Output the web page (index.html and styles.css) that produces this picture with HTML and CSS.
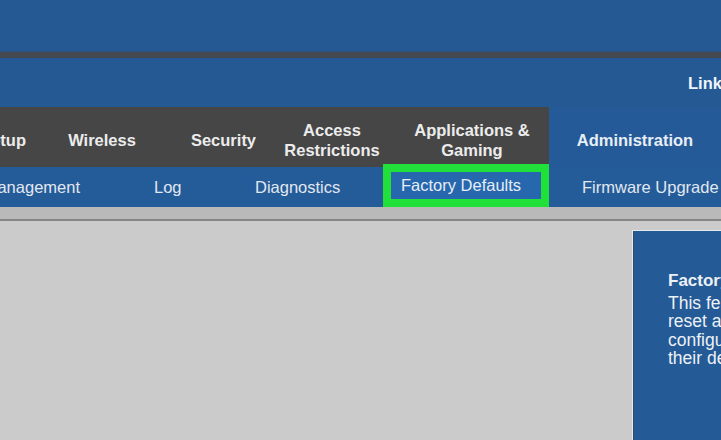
FILE: index.html
```html
<!DOCTYPE html>
<html lang="en">
<head>
  <meta charset="UTF-8">
  <meta name="viewport" content="width=device-width, initial-scale=1.0">
  <title>Administration - Factory Defaults</title>
  <link rel="stylesheet" href="styles.css">
</head>
<body>
  <div class="page">
    <div class="top-band"></div>
    <div class="rule"></div>
    <div class="brand-row">
      <span class="brand">Linksys E1200</span>
    </div>

    <nav class="tabs">
      <div class="tab tab-setup">Setup</div>
      <div class="tab tab-wireless">Wireless</div>
      <div class="tab tab-security">Security</div>
      <div class="tab tab-access">Access<br>Restrictions</div>
      <div class="tab tab-apps">Applications &amp;<br>Gaming</div>
      <div class="tab tab-admin active">Administration</div>
    </nav>

    <nav class="subtabs">
      <div class="sub sub-mgmt">Management</div>
      <div class="sub sub-log">Log</div>
      <div class="sub sub-diag">Diagnostics</div>
      <div class="sub sub-factory">
        <div class="highlight">Factory Defaults</div>
      </div>
      <div class="sub sub-firmware">Firmware Upgrade</div>
    </nav>

    <div class="strip"></div>

    <main class="content">
      <aside class="help">
        <div class="help-title">Factory Defaults:</div>
        This feature allows you to<br>
        reset all of the<br>
        configuration settings to<br>
        their default values.
      </aside>
    </main>
  </div>
</body>
</html>
```

FILE: styles.css
```css
html, body {
  margin: 0;
  padding: 0;
  overflow: hidden;
}

body {
  font-family: "Liberation Sans", Arial, sans-serif;
  background-color: #cbcbcb;
  color: #e9edf2;
}

.page {
  width: 721px;
  height: 440px;
  overflow: hidden;
  display: flex;
  flex-direction: column;
}

.page > * {
  flex: none;
}

.top-band {
  height: 52px;
  background-color: #245994;
}

.rule {
  height: 6px;
  background-color: #444851;
  box-shadow: 0 0 2px #444851;
}

.brand-row {
  height: 49px;
  background-color: #245994;
  display: flex;
  align-items: center;
  padding-left: 688px;
  padding-top: 1px;
  box-sizing: border-box;
  white-space: nowrap;
}

.brand {
  font-weight: bold;
  font-size: 16.5px;
  color: #eef3fa;
}

/* main tab row */
.tabs {
  display: flex;
  height: 60px;
  background-color: #464646;
}

.tab {
  flex: none;
  display: flex;
  align-items: center;
  justify-content: center;
  text-align: center;
  box-sizing: border-box;
  padding-top: 5px;
  font-weight: bold;
  font-size: 16.5px;
  line-height: 20px;
  color: #ececec;
  white-space: nowrap;
}

.tab-setup { width: 26px; justify-content: flex-end; overflow: hidden; }
.tab-wireless { width: 152px; }
.tab-security { width: 91px; }
.tab-access { width: 126px; }
.tab-apps { width: 154px; }
.tab-admin { width: 172px; }

.tab.active {
  background-color: #245a97;
  color: #e8eef6;
}

/* sub tab row */
.subtabs {
  display: flex;
  height: 40px;
  background-color: #245b99;
}

.sub {
  flex: none;
  display: flex;
  align-items: center;
  font-size: 16.5px;
  color: #e2e8f0;
  white-space: nowrap;
  box-sizing: border-box;
}

.sub-mgmt { width: 154px; justify-content: flex-end; padding-right: 74px; overflow: hidden; }
.sub-log { width: 101px; }
.sub-diag { width: 128px; }
.sub-factory { width: 166px; align-items: stretch; }
.sub-firmware { width: 172px; padding-left: 33px; }

.highlight {
  flex: 1;
  margin-top: -3px;
  border: 8px solid #22e03a;
  background-color: #2767ae;
  display: flex;
  align-items: center;
  padding-left: 10px;
  color: #e6edf5;
}

.strip {
  height: 12px;
  background-color: #b9b9b9;
  border-bottom: 2px solid #858585;
}

/* body area */
.content {
  flex: 1 1 auto;
  display: flex;
  padding: 10px 0 0 633px;
  background-color: #cbcbcb;
}

.help {
  flex: none;
  width: 240px;
  height: 260px;
  box-sizing: border-box;
  background-color: #245a96;
  border-left: 1px solid #3a4d66;
  box-shadow: -1px -1px 0 #e4e9ef;
  padding: 41px 0 0 34px;
  font-size: 17.5px;
  line-height: 18.5px;
  color: #edf1f6;
  white-space: nowrap;
}

.help-title {
  font-weight: bold;
  font-size: 17px;
  margin-bottom: 3px;
}
```
